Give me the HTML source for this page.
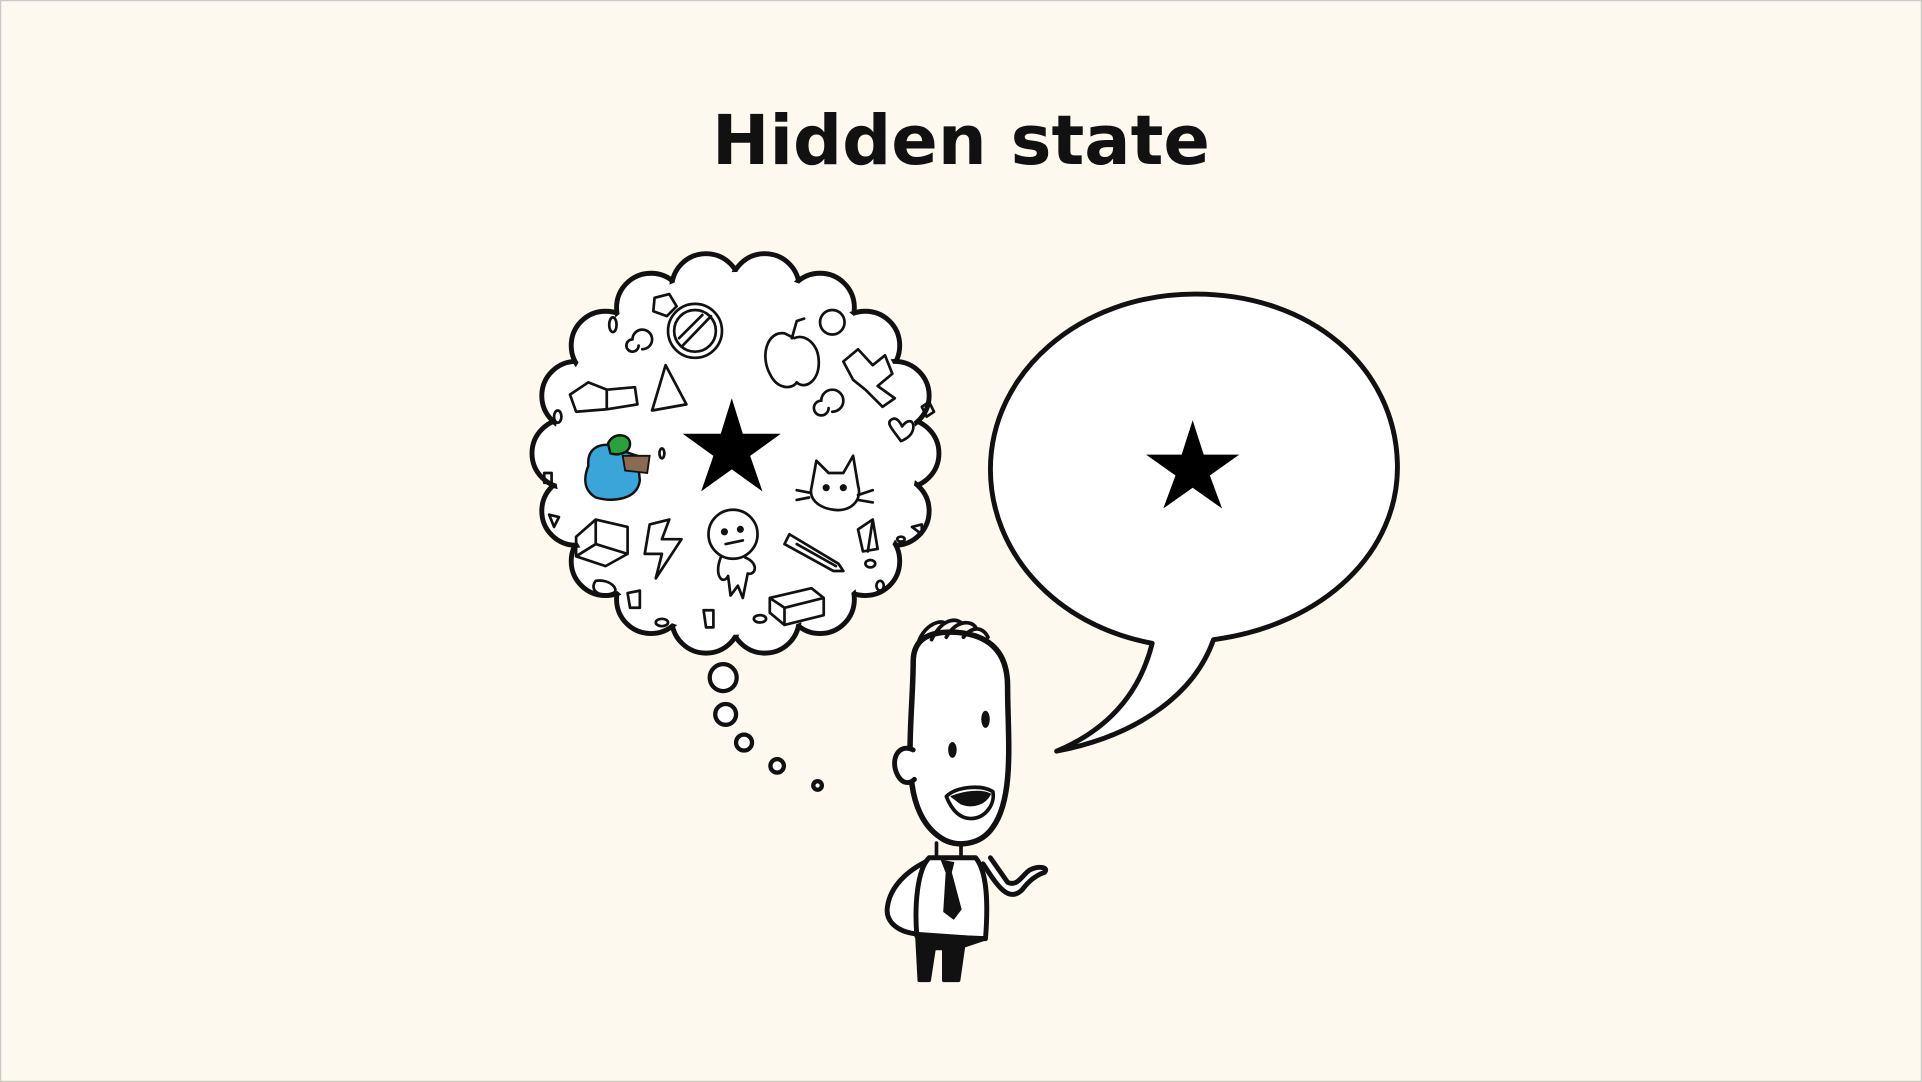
<!DOCTYPE html>
<html><head><meta charset="utf-8"><style>
html,body{margin:0;padding:0;background:#fdf9ef;}
svg{display:block}
</style></head><body>
<svg width="1922" height="1082" viewBox="0 0 1568 883" preserveAspectRatio="none" xmlns="http://www.w3.org/2000/svg">
<rect x="0.5" y="0.5" width="1567" height="882" fill="#fdf9ef" stroke="#c9c9c9" stroke-width="1"/>
<text x="784" y="134" text-anchor="middle" font-family="DejaVu Sans, Liberation Sans, sans-serif" font-weight="bold" font-size="56" fill="#111">Hidden state</text>

<!-- thought cloud -->
<g fill="#fff" stroke="#111" stroke-width="4">
<circle cx="738" cy="370" r="28"/><circle cx="730" cy="417" r="28"/><circle cx="706" cy="458" r="28"/>
<circle cx="669" cy="489" r="28"/><circle cx="624" cy="505" r="28"/><circle cx="576" cy="505" r="28"/>
<circle cx="531" cy="489" r="28"/><circle cx="494" cy="458" r="28"/><circle cx="470" cy="417" r="28"/>
<circle cx="462" cy="370" r="28"/><circle cx="470" cy="323" r="28"/><circle cx="494" cy="282" r="28"/>
<circle cx="531" cy="251" r="28"/><circle cx="576" cy="235" r="28"/><circle cx="624" cy="235" r="28"/>
<circle cx="669" cy="251" r="28"/><circle cx="706" cy="282" r="28"/><circle cx="730" cy="323" r="28"/>
</g>
<circle cx="600" cy="370" r="148" fill="#fff"/>
<polygon points="597,325 606,354 637,354 612,372 622,401 597,383 572,401 582,372 557,354 588,354" fill="#000"/>

<!-- doodles -->
<g fill="none" stroke="#111" stroke-width="2.2" stroke-linejoin="round" stroke-linecap="round">
<circle cx="567" cy="270" r="22"/><circle cx="567" cy="270" r="17"/><line x1="556" y1="283" x2="580" y2="258"/><line x1="554" y1="276" x2="573" y2="257"/>
<path d="M543 298 L532 335 L560 330 Z"/>
<path d="M640 272 C626 270 620 290 628 305 C634 318 646 318 650 312 C656 318 668 312 668 296 C668 280 656 272 648 276 Z"/><path d="M646 276 L650 262 L656 260"/>
<circle cx="679" cy="263" r="10"/>
<path d="M688 295 L700 285 L712 298 L722 290 L728 305 L716 315 L730 325 L720 332 L706 318 L696 310 Z"/>
<path d="M676 333 a6 6 0 1 1 -6 -6 a9 9 0 1 1 9 9"/>
<path d="M735 360 C728 350 722 345 728 342 C732 340 735 346 736 348 C740 342 746 342 745 350 C744 355 740 358 735 360 Z"/>
<path d="M662 398 L666 376 L676 386 L688 386 L696 372 L700 396 C704 410 692 418 680 416 C666 414 660 406 662 398 Z"/>
<circle cx="674" cy="398" r="1.8" fill="#111"/><circle cx="688" cy="398" r="1.8" fill="#111"/>
<path d="M650 400 L660 402 M650 408 L660 406 M700 404 L712 400 M700 408 L712 410"/>
<path d="M465 322 L480 312 L495 318 L518 316 L520 330 L495 334 L470 336 Z M495 318 L495 334"/>
<path d="M521 282 a5 5 0 1 1 -5 -5 a8 8 0 1 1 8 8"/>
<path d="M534 243 L546 240 L552 250 L544 258 L533 254 Z"/>
<path d="M470 438 L486 424 L512 430 L512 452 L494 462 L470 454 Z M486 424 L486 444 L470 454 M486 444 L512 452"/>
<path d="M530 428 L546 424 L540 440 L556 440 L535 472 L540 452 L526 452 Z"/>
<circle cx="598" cy="436" r="20"/><circle cx="591" cy="434" r="1.8" fill="#111"/><circle cx="604" cy="432" r="1.8" fill="#111"/><path d="M592 444 L606 441"/>
<path d="M588 455 C582 470 590 478 594 470 L596 486 L602 478 L606 488 L610 468 C616 470 620 460 608 455"/>
<path d="M640 444 L644 436 L684 460 L688 466 L680 466 Z M650 444 L682 462"/>
<path d="M700 432 L712 424 L716 448 L704 450 Z M712 424 L708 450"/>
<path d="M628 488 L662 480 L672 488 L672 502 L640 510 L628 500 Z M628 488 L640 496 L672 488 M640 496 L640 510"/>
<path d="M486 474 C480 482 490 488 500 484 C506 482 498 472 486 474 Z"/>
<path d="M512 484 L522 482 L522 496 L514 496 Z"/>
<path d="M574 498 L582 498 L582 512 L576 512 Z"/>
<path d="M444 386 L450 386 L450 394 L444 394 Z"/><path d="M448 420 L456 422 L452 430 Z"/>
<path d="M752 332 L758 328 L762 336 L756 340 Z"/><path d="M744 430 L752 428 L752 436 Z"/>
<ellipse cx="455" cy="340" rx="3" ry="5"/><ellipse cx="500" cy="265" rx="3" ry="6"/><ellipse cx="540" cy="370" rx="2" ry="4"/>
<ellipse cx="710" cy="460" rx="4" ry="3"/><ellipse cx="620" cy="505" rx="5" ry="3"/><ellipse cx="540" cy="508" rx="5" ry="3"/>
<ellipse cx="735" cy="440" rx="3" ry="2"/><ellipse cx="718" cy="478" rx="3" ry="4"/>
</g>
<!-- blue figure -->
<path d="M480 380 C478 360 500 360 508 368 L520 372 L522 392 C520 408 500 410 486 406 C476 400 476 390 480 380 Z" fill="#3aa5d8" stroke="#111" stroke-width="2"/>
<path d="M496 362 C500 352 514 354 514 362 C514 370 504 372 498 370 Z" fill="#2ba13c" stroke="#111" stroke-width="2"/>
<path d="M508 372 L530 372 L528 386 L510 384 Z" fill="#8a6a50" stroke="#111" stroke-width="1.5"/>

<!-- thought circles -->
<g fill="#fff" stroke="#111" stroke-width="3.5">
<circle cx="590" cy="553" r="11"/><circle cx="592" cy="583" r="8.5"/><circle cx="607" cy="606" r="6.5"/><circle cx="634" cy="625" r="5.5"/><circle cx="667" cy="641" r="3.5"/>
</g>

<!-- speech bubble -->
<path d="M990 522 C1080 510 1142 450 1140 378 C1138 300 1070 240 975 240 C880 240 808 305 808 383 C808 450 860 510 940 525 C930 565 905 595 862 613 C930 600 975 565 990 522 Z" fill="#fff" stroke="#111" stroke-width="4" stroke-linejoin="round"/>
<polygon points="973,343 982,371 1011,371 987,388 997,415 973,398 949,415 959,388 935,371 964,371" fill="#000"/>

<!-- man -->
<g stroke="#111" stroke-linejoin="round" stroke-linecap="round">
<path d="M758 702 C740 710 726 724 724 740 C722 752 732 760 746 762" fill="#fff" stroke-width="4"/>
<path d="M802 705 C812 720 822 738 834 726 C840 718 846 714 852 712 C856 708 848 706 840 710 C834 714 830 724 822 720 L808 700" fill="#fff" stroke-width="4"/>
<path d="M758 700 C748 710 746 740 748 764 L804 766 C806 740 806 712 796 700 Z" fill="#fff" stroke-width="4"/>
<path d="M748 762 L750 800 L758 800 L762 774 L770 774 L770 800 L782 800 L786 772 L804 766 Z" fill="#111" stroke-width="3"/>
<path d="M768 702 L778 704 L776 712 L784 742 L778 750 L770 744 L772 712 Z" fill="#111" stroke-width="1"/>
<path d="M764 688 L764 700 M784 690 L784 700" stroke-width="3" fill="none"/>
<path d="M745 540 C745 520 760 515 780 516 C805 518 822 530 822 560 C822 600 828 650 810 675 C800 690 780 692 768 684 C752 674 746 655 744 640 C740 610 745 570 745 540 Z" fill="#fff" stroke-width="4.5"/>
<path d="M745 612 C733 606 726 620 732 632 C736 640 742 640 746 636" fill="#fff" stroke-width="4"/>
<path d="M748 528 C752 512 764 506 770 508 M760 522 C768 506 778 504 784 508 M772 520 C780 506 792 506 796 512 M786 520 C794 510 802 512 806 520" fill="none" stroke-width="3"/>
<ellipse cx="804" cy="587" rx="3.5" ry="7" fill="#111" stroke="none"/>
<ellipse cx="777" cy="612" rx="3.5" ry="6.5" fill="#111" stroke="none"/>
<path d="M772 650 C780 642 800 640 810 646 C812 656 804 668 792 668 C782 668 776 660 772 650 Z" fill="#fff" stroke-width="3"/>
<path d="M776 650 C786 646 800 644 808 648 C804 656 794 660 784 656 Z" fill="#111" stroke-width="1"/>
</g>
</svg>
</body></html>
